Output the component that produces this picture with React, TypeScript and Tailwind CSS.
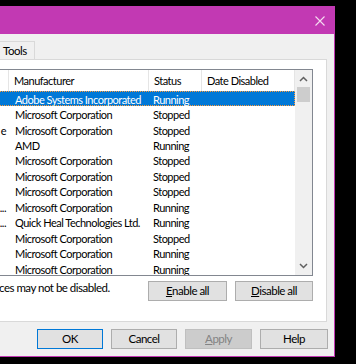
const rows = [
    { svc: "", mfr: "Adobe Systems Incorporated", status: "Running" },
    { svc: "", mfr: "Microsoft Corporation", status: "Stopped" },
    { svc: "e", mfr: "Microsoft Corporation", status: "Stopped" },
    { svc: "", mfr: "AMD", status: "Running" },
    { svc: "", mfr: "Microsoft Corporation", status: "Stopped" },
    { svc: "", mfr: "Microsoft Corporation", status: "Stopped" },
    { svc: "", mfr: "Microsoft Corporation", status: "Stopped" },
    { svc: "...", mfr: "Microsoft Corporation", status: "Running" },
    { svc: "...", mfr: "Quick Heal Technologies Ltd.", status: "Running" },
    { svc: "", mfr: "Microsoft Corporation", status: "Stopped" },
    { svc: "", mfr: "Microsoft Corporation", status: "Running" },
    { svc: "", mfr: "Microsoft Corporation", status: "Running" },
]

function Btn({ children, className = "" }: { children: React.ReactNode; className?: string }) {
    return (
        <div className={`flex h-[20px] items-center justify-center border ${className}`}>{children}</div>
    )
}

export default function App() {
    return (
        <div className="h-[364px] w-[356px] overflow-hidden bg-black font-['Lato',sans-serif] text-[11px] leading-none tracking-[-0.5px] text-black">
            <div className="mt-[6px] flex h-[351px] w-[335px] flex-col border-r border-b border-[#c239b3] bg-[#f0f0f0]">
                {/* Title bar */}
                <div className="flex h-[28px] shrink-0 items-center justify-end bg-[#c239b3] pr-[9px]">
                    <svg width="10" height="10" viewBox="0 0 10 10" className="mt-[1px]">
                        <path d="M0.5 0.5 L9.5 9.5 M9.5 0.5 L0.5 9.5" stroke="#f4dcf0" strokeWidth="1.1" />
                    </svg>
                </div>

                {/* Tabs */}
                <div className="flex pt-[7px]">
                    <div className="flex h-[18px] w-[35px] items-center border border-b-0 border-l-0 border-[#d9d9d9] bg-[#f0f0f0] pl-[3px] text-[11.5px]">
                        Tools
                    </div>
                </div>

                {/* Tab panel */}
                <div className="mr-[7px] flex h-[263px] flex-col border border-l-0 border-[#d9d9d9] bg-white pt-[9px] pr-[13px]">
                    <div className="flex h-[207px] border border-l-0 border-[#828790]">
                        <div className="flex flex-1 flex-col overflow-hidden">
                            {/* Header */}
                            <div className="flex h-[21px] shrink-0 items-center">
                                <div className="h-full w-[9px] border-r border-[#e5e5e5]" />
                                <div className="flex h-full w-[140px] items-center border-r border-[#e5e5e5] pl-[5px]">Manufacturer</div>
                                <div className="flex h-full w-[53px] items-center border-r border-[#e5e5e5] pl-[5px]">Status</div>
                                <div className="flex h-full flex-1 items-center border-r border-[#e5e5e5] pl-[5px]">Date Disabled</div>
                            </div>
                            {rows.map((r, i) => (
                                <div
                                    key={i}
                                    className={`flex h-[15.45px] shrink-0 items-center whitespace-nowrap pt-[1px] ${
                                        i === 0 ? "border border-l-0 border-dotted border-[#ff9b3a] bg-[#0078d7] text-white" : ""
                                    }`}
                                >
                                    <div className="flex w-[9px] justify-end overflow-hidden pr-[3px]">{r.svc}</div>
                                    <div className="w-[140px] pl-[6px]">{r.mfr}</div>
                                    <div className="w-[53px] pl-[4px]">{r.status}</div>
                                </div>
                            ))}
                        </div>
                        {/* Scrollbar */}
                        <div className="flex w-[17px] flex-col items-center bg-[#f0f0f0] pt-[6px]">
                            <svg width="9" height="6" viewBox="0 0 9 6">
                                <path d="M1 5 L4.5 1.5 L8 5" fill="none" stroke="#606060" strokeWidth="1.5" />
                            </svg>
                            <div className="mt-[5px] h-[15px] w-[13px] bg-[#cdcdcd]" />
                            <div className="flex-1" />
                            <svg width="9" height="6" viewBox="0 0 9 6" className="mb-[6px]">
                                <path d="M1 1 L4.5 4.5 L8 1" fill="none" stroke="#606060" strokeWidth="1.5" />
                            </svg>
                        </div>
                    </div>

                    <div className="mt-[5px] flex items-start">
                        <div className="ml-[-1px] flex-1 pt-[1px] text-[11.5px]">ces may not be disabled.</div>
                        <div className="flex gap-[8px] text-[11.5px]">
                            <Btn className="w-[79px] border-[#adadad] bg-[#e1e1e1]">
                                <span className="underline">E</span>nable all
                            </Btn>
                            <Btn className="w-[78px] border-[#adadad] bg-[#e1e1e1]">
                                <span className="underline">D</span>isable all
                            </Btn>
                        </div>
                    </div>
                </div>

                {/* Bottom buttons */}
                <div className="mt-[7px] flex justify-end gap-[8px] pr-[6px] text-[11.5px]">
                    <Btn className="w-[66px] border-[#0078d7] bg-[#e1e1e1]">OK</Btn>
                    <Btn className="w-[66px] border-[#adadad] bg-[#e1e1e1]">Cancel</Btn>
                    <Btn className="w-[67px] border-[#bfbfbf] bg-[#cccccc] text-[#838383]">
                        <span className="underline">A</span>pply
                    </Btn>
                    <Btn className="w-[68px] border-[#adadad] bg-[#e1e1e1]">Help</Btn>
                </div>
            </div>
        </div>
    )
}
